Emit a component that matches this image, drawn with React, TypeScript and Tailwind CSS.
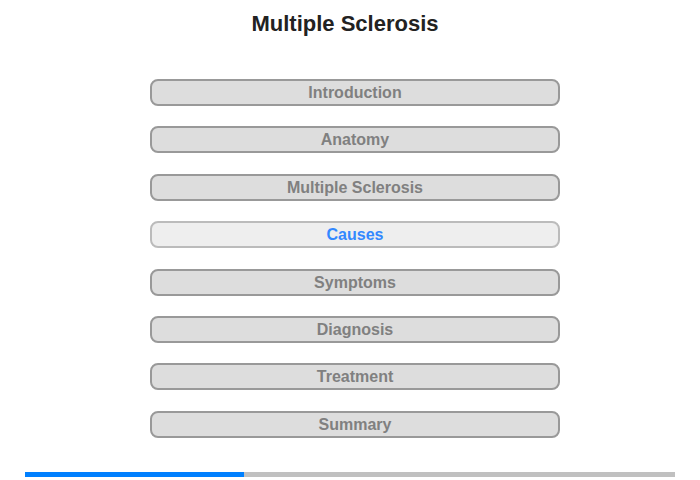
import React from "react";

const items = ["Introduction", "Anatomy", "Multiple Sclerosis", "Causes", "Symptoms", "Diagnosis", "Treatment", "Summary"];

export default function App() {
  return (
    <div className="relative w-[700px] h-[480px] bg-white overflow-hidden" style={{ fontFamily: '"Liberation Sans", Arial, sans-serif' }}>
      <h1 className="pt-[11px] pr-[10px] text-center text-[22px] leading-[26px] font-bold text-[#222222]">Multiple Sclerosis</h1>
      <div className="mt-[42px] pl-[150px] flex flex-col items-start gap-[20.4px]">
        {items.map((t) => {
          const active = t === "Causes";
          return (
            <div
              key={t}
              className={
                active
                  ? "w-[410px] h-[27px] pt-px rounded-[8px] border-2 border-[#bbbbbb] bg-[#eeeeee] flex items-center justify-center text-[16px] font-bold text-[#3388ff]"
                  : "w-[410px] h-[27px] pt-px rounded-[8px] border-2 border-[#999999] bg-[#dddddd] flex items-center justify-center text-[16px] font-bold text-[#808080]"
              }
            >
              {t}
            </div>
          );
        })}
      </div>
      <div className="absolute left-[25px] top-[472px] w-[650px] h-[5px] bg-[#c0c0c0] flex">
        <div className="w-[219px] h-full bg-[#0080ff]" />
      </div>
    </div>
  );
}
